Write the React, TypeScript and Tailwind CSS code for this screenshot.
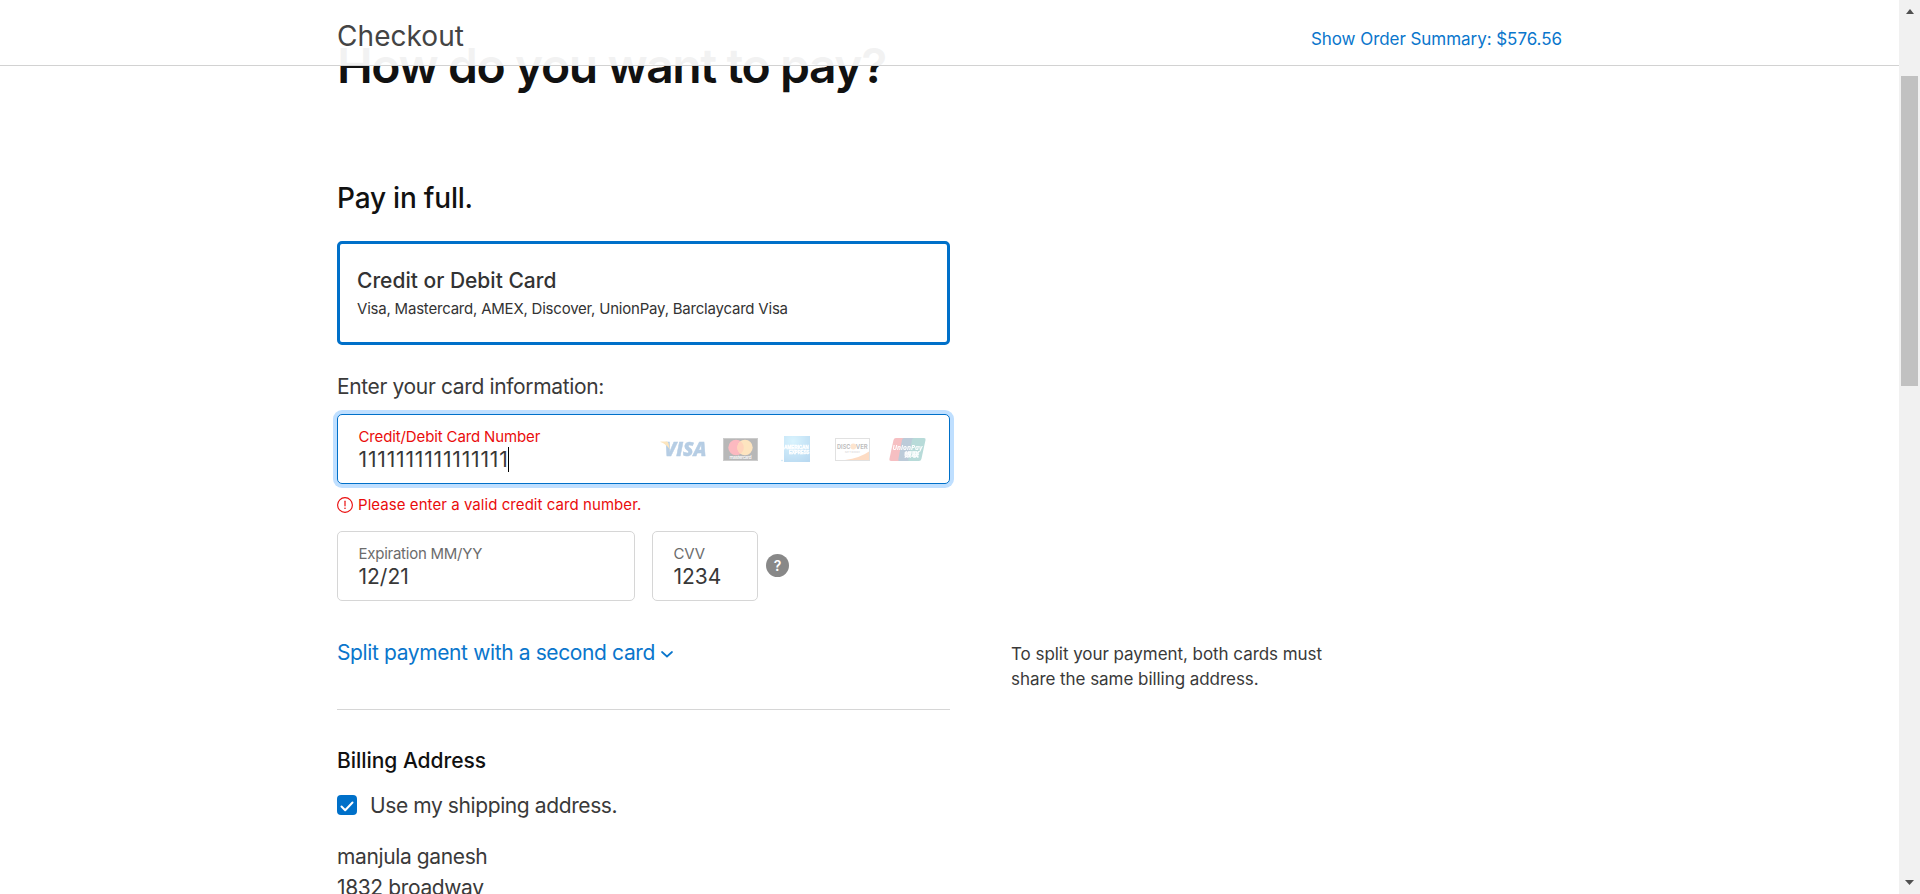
import { ReactNode } from "react";

function VisaLogo() {
  return (
    <svg width="47" height="16" viewBox="0 0 47 16">
      <text x="4.500" y="15" fontFamily="Open Sans, sans-serif" fontSize="20" fontWeight="800" fontStyle="italic" fill="#0a58a4" stroke="#0a58a4" strokeWidth=".5" textLength="42" lengthAdjust="spacingAndGlyphs">VISA</text>
      <path d="M.5 0.500h6q1.600 0.100 2 1.800L9.800 8.500Q6.500 3 .5 1Z" fill="#f7a823" />
    </svg>
  );
}

function MastercardLogo() {
  return (
    <svg width="35" height="23" viewBox="0 0 35 23">
      <rect width="35" height="23" fill="#111" />
      <rect x=".5" y=".5" width="34" height="22" fill="none" stroke="#555" />
      <circle cx="13" cy="9.500" r="7.700" fill="#f5142c" />
      <circle cx="22" cy="9.500" r="7.700" fill="#f9a32a" />
      <path d="M17.500 3.200a7.700 7.700 0 0 1 0 12.600a7.700 7.700 0 0 1 0-12.600" fill="#ff6f1f" />
      <text x="6.500" y="20.800" fontFamily="Inter, sans-serif" fontSize="4.600" fontWeight="500" fill="#fff" textLength="22">mastercard</text>
    </svg>
  );
}

function AmexLogo() {
  return (
    <svg width="29" height="26" viewBox="0 0 29 26">
      <defs>
        <radialGradient id="amex" cx=".35" cy=".2" r=".95">
          <stop offset="0" stopColor="#7fd8fb" />
          <stop offset="1" stopColor="#1580d0" />
        </radialGradient>
      </defs>
      <rect x="3" width="26" height="26" fill="url(#amex)" />
      <text x="3.300" y="13.300" fontFamily="Liberation Sans, sans-serif" fontSize="5.200" fontWeight="700" fill="#fff" stroke="#fff" strokeWidth=".4" textLength="24.500" lengthAdjust="spacingAndGlyphs">AMERICAN</text>
      <text x="8" y="18.200" fontFamily="Liberation Sans, sans-serif" fontSize="5.200" fontWeight="700" fill="#fff" stroke="#fff" strokeWidth=".4" textLength="20.500" lengthAdjust="spacingAndGlyphs">EXPRESS</text>
      <circle cx="1" cy="24.500" r=".8" fill="#4aa8e0" />
    </svg>
  );
}

function DiscoverLogo() {
  return (
    <svg width="35" height="23" viewBox="0 0 35 23">
      <rect x=".5" y=".5" width="34" height="22" fill="#fff" stroke="#999" />
      <path d="M34 13.500V22H10Q25 20 34 13.500Z" fill="#f9893b" />
      <circle cx="18.300" cy="8.500" r="2.900" fill="#f9a35c" />
      <text x="2" y="10.900" fontFamily="Inter, sans-serif" fontSize="6.600" fontWeight="700" fill="#222" textLength="13.500" lengthAdjust="spacingAndGlyphs">DISC</text>
      <text x="20.800" y="10.900" fontFamily="Inter, sans-serif" fontSize="6.600" fontWeight="700" fill="#222" textLength="12" lengthAdjust="spacingAndGlyphs">VER</text>
      <text x="10" y="14.600" fontFamily="Inter, sans-serif" fontSize="2.600" fill="#555" textLength="15">NETWORK</text>
    </svg>
  );
}

function UnionPayLogo() {
  return (
    <svg width="37" height="23" viewBox="0 0 37 23">
      <path d="M7 0H16L11.500 23H2Q0 23 .4 21L4.500 2Q5 0 7 0Z" fill="#e02834" />
      <path d="M15 0H26L21.500 23H10Q9 23 9.400 21L13 2Q13.400 0 15 0Z" fill="#20507f" />
      <path d="M25 0H35Q37 0 36.500 2L32.400 21Q32 23 30 23H20Q18.800 23 19.300 21L23 2Q23.400 0 25 0Z" fill="#11867f" />
      <text x="3.500" y="11.500" fontFamily="Open Sans, sans-serif" fontSize="7.800" fontWeight="700" fontStyle="italic" fill="#fff" textLength="30" lengthAdjust="spacingAndGlyphs">UnionPay</text>
      <text x="18" y="18.700" transform="skewX(-10)" fontFamily="Noto Sans CJK SC, sans-serif" fontSize="6.800" fontWeight="700" fill="#fff" stroke="#fff" strokeWidth=".3" textLength="15" lengthAdjust="spacingAndGlyphs">银联</text>
    </svg>
  );
}

function Field({ label, labelClass, value, className, children }: { label: string; labelClass: string; value: ReactNode; className: string; children?: ReactNode }) {
  return (
    <div className={`flex h-[70px] rounded-[5px] border bg-white pl-[20.5px] ${className}`}>
      <div className="flex flex-col pt-[12.5px]">
        <span className={`text-[15px] leading-[18px] ${labelClass}`}>{label}</span>
        <span className="mt-[1.5px] flex h-[25px] items-center text-[21px] leading-6 text-[#383838]">{value}</span>
      </div>
      {children}
    </div>
  );
}

export default function App() {
  return (
    <div className="relative flex h-[894px] w-full overflow-hidden bg-white font-['Inter',sans-serif] text-[#3a3a3a]">
      <header className="absolute top-0 left-0 z-10 flex h-[66px] w-[1899px] justify-between border-b border-[#d2d2d2] bg-white/95 pr-[337px] pl-[337px]">
        <div className="pt-[20px] text-[28px] leading-8 tracking-[0.06px] text-[#444]">Checkout</div>
        <a className="pt-[27px] text-[17px] leading-6 tracking-[-0.05px] text-[#0a76cc]">Show Order Summary: $576.56</a>
      </header>

      <main className="flex-1 overflow-hidden pt-[38px] pl-[337px] whitespace-nowrap">
        <h1 className="text-[48px] leading-[56px] font-semibold tracking-[-1.42px] text-[#111]">How do you want to pay?</h1>
        <h2 className="mt-[88px] text-[28px] leading-8 font-medium tracking-[-0.2px] text-[#111]">Pay in full.</h2>

        <div className="mt-[27px] h-[104px] w-[613px] rounded-[5px] border-3 border-[#0070c9] pt-[24px] pl-[17px] text-[#333]">
          <div className="text-[21px] leading-[26px] font-medium">Credit or Debit Card</div>
          <div className="mt-[5px] text-[15px] leading-5 tracking-[-0.21px]">Visa, Mastercard, AMEX, Discover, UnionPay, Barclaycard Visa</div>
        </div>

        <p className="mt-[27px] text-[21px] leading-[30px] tracking-[-0.36px]">Enter your card information:</p>

        <Field
          className="mt-[12px] w-[613px] justify-between border-[#0070c9] pr-[23px] shadow-[0_0_0_4px_#bfdfff]"
          labelClass="tracking-[-0.13px] text-[#ea0c0c]"
          label="Credit/Debit Card Number"
          value={
            <>
              <span className="-mr-px tracking-[0.84px]">1111111111111111</span>
              <span className="h-[25px] w-px bg-black" />
            </>
          }
        >
          <div className="flex items-center opacity-30">
            <VisaLogo />
            <div className="ml-4"><MastercardLogo /></div>
            <div className="ml-[23px]"><AmexLogo /></div>
            <div className="ml-[25px]"><DiscoverLogo /></div>
            <div className="ml-[19px]"><UnionPayLogo /></div>
          </div>
        </Field>

        <div className="mt-[11px] flex h-5 items-center text-[15px] leading-5 tracking-[0.06px] text-[#ea0c0c]">
          <svg width="16" height="16" viewBox="0 0 16 16" className="mr-[5px]">
            <circle cx="8" cy="8" r="7.400" fill="none" stroke="#ea0c0c" strokeWidth="1.100" />
            <path d="M8 4.200v4.600" stroke="#ea0c0c" strokeWidth="1.200" strokeLinecap="round" />
            <circle cx="8" cy="11.300" r=".8" fill="#ea0c0c" />
          </svg>
          Please enter a valid credit card number.
        </div>

        <div className="mt-4 flex items-center">
          <Field className="w-[298px] border-[#d6d6d6]" labelClass="text-[#6c6c6c] tracking-[-0.25px]" label="Expiration MM/YY" value="12/21" />
          <Field className="ml-[17px] w-[106px] border-[#d6d6d6]" labelClass="text-[#6c6c6c] tracking-[-0.2px]" label="CVV" value="1234" />
          <div className="mb-[2px] ml-2 flex h-[23px] w-[23px] items-center justify-center rounded-full bg-[#888] text-[14px] font-semibold text-white">?</div>
        </div>

        <div className="mt-[37px] flex">
          <a className="flex w-[674px] items-center text-[21px] leading-[30px] tracking-[-0.38px] text-[#0a76cc]">
            Split payment with a second card
            <svg width="12" height="7" viewBox="0 0 12 7" className="mt-[3px] ml-[6.5px]">
              <path d="M1 1l5 4.500L11 1" fill="none" stroke="#0a76cc" strokeWidth="1.700" strokeLinecap="round" />
            </svg>
          </a>
          <p className="mt-[4px] -mb-[24px] text-[17px] leading-[25px] tracking-[-0.05px]">To split your payment, both cards must<br />share the same billing address.</p>
        </div>

        <div className="mt-[41px] h-px w-[613px] bg-[#d6d6d6]" />

        <h3 className="mt-[36px] text-[21px] leading-[30px] font-medium tracking-[-0.04px] text-[#111]">Billing Address</h3>
        <label className="mt-[15px] flex h-[30px] items-center text-[21px] leading-[30px] tracking-[-0.4px]">
          <span className="mr-[13px] mb-0.5 flex h-5 w-5 items-center justify-center rounded bg-[#0070c9]">
            <svg width="14" height="11" viewBox="0 0 14 11" className="mt-[3px]">
              <path d="M1.500 5.500l3.700 3.800L12.500 1.500" fill="none" stroke="#fff" strokeWidth="2" strokeLinecap="round" strokeLinejoin="round" />
            </svg>
          </span>
          Use my shipping address.
        </label>
        <address className="mt-[20px] text-[21px] leading-[31px] tracking-[-0.38px] not-italic">manjula ganesh<br />1832 broadway</address>
      </main>

      <aside className="flex h-full w-[21px] flex-col items-center justify-between bg-[#f1f1f1] py-[9px]">
        <div className="flex flex-col items-center">
          <svg width="8" height="5" viewBox="0 0 8 5"><path d="M0 5L4 0L8 5Z" fill="#505050" /></svg>
          <div className="mt-[62px] h-[310px] w-[17px] bg-[#c1c1c1]" />
        </div>
        <svg width="9" height="5" viewBox="0 0 9 5"><path d="M0 0L4.500 5L9 0Z" fill="#505050" /></svg>
      </aside>
    </div>
  );
}
